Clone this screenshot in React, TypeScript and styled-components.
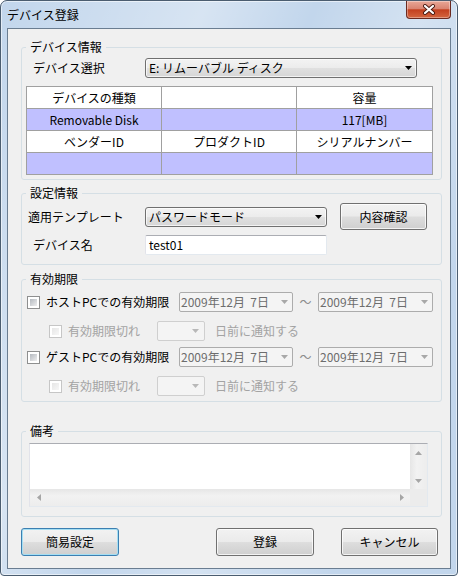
import React from 'react'
import styled, { createGlobalStyle } from 'styled-components'

const GlobalStyle = createGlobalStyle`
  html, body {
    margin: 0;
    padding: 0;
    background: #ffffff;
  }
  body {
    font-family: "Noto Sans CJK JP", "Liberation Sans", sans-serif;
    font-size: 12px;
    color: #000;
  }
  * {
    box-sizing: border-box;
  }
`

const Window = styled.div`
  width: 458px;
  height: 576px;
  display: flex;
  flex-direction: column;
  border: 1px solid #4b5d70;
  border-radius: 7px 7px 4px 4px;
  overflow: hidden;
  background:
    linear-gradient(112deg, rgba(255, 255, 255, 0) 0%, rgba(255, 255, 255, 0.35) 30%, rgba(255, 255, 255, 0) 46%, rgba(255, 255, 255, 0.3) 62%, rgba(255, 255, 255, 0) 82%),
    #c2d6ec;
  box-shadow: inset 0 0 0 1px rgba(255, 255, 255, 0.55);
`

const TitleBar = styled.div`
  height: 27px;
  display: flex;
  justify-content: space-between;
  align-items: flex-start;
  padding: 0 6px 0 6px;
`

const TitleText = styled.span`
  margin-top: 5px;
  font-size: 12px;
  line-height: 17px;
`

const CloseButton = styled.div`
  width: 45px;
  height: 18px;
  display: flex;
  align-items: center;
  justify-content: center;
  border: 1px solid #6b2a20;
  border-top: none;
  border-radius: 0 0 4px 4px;
  background: linear-gradient(#e8a797 0%, #d98471 45%, #c3401f 52%, #d4653f 100%);
  box-shadow: inset 0 0 0 1px rgba(255, 255, 255, 0.35);
`

const Client = styled.div`
  flex: 1;
  margin: 0 6px 6px 6px;
  border: 1px solid #6a7d91;
  background: #f0f0f0;
  padding: 11px 8px 0 13px;
  display: flex;
  flex-direction: column;
`

const Group = styled.fieldset<{ $top?: number; $bottom?: number }>`
  margin: ${p => p.$top ?? 0}px 0 0 0;
  padding: 0 8px ${p => p.$bottom ?? 4}px 4px;
  min-width: 0;
  border: 1px solid #d5dfe5;
  border-radius: 3px;
`

const Legend = styled.legend`
  padding: 0 4px;
  font-size: 12px;
  line-height: 14px;
`

const FieldRow = styled.div`
  margin-top: 4px;
  height: 20px;
  display: flex;
  align-items: center;
`

const Label = styled.span<{ $indent?: number; $w?: number; $area?: string }>`
  flex: none;
  grid-area: ${p => p.$area ?? 'auto'};
  width: ${p => (p.$w ? `${p.$w}px` : 'auto')};
  padding-left: ${p => p.$indent ?? 0}px;
  white-space: nowrap;
  line-height: 14px;
`

const Combo = styled.div<{ $w?: number; $area?: string }>`
  grid-area: ${p => p.$area ?? 'auto'};
  width: ${p => (p.$w ? `${p.$w}px` : '100%')};
  height: 20px;
  display: flex;
  align-items: center;
  justify-content: space-between;
  padding: 0 4px 0 3px;
  border: 1px solid #707070;
  border-radius: 3px;
  background: linear-gradient(#f3f3f3 0%, #ececec 48%, #e0e0e0 52%, #d6d6d6 100%);
  box-shadow: inset 0 0 0 1px rgba(255, 255, 255, 0.7);
  white-space: nowrap;
  line-height: 14px;
`

const InfoTable = styled.table`
  margin-top: 8px;
  width: 406px;
  border-collapse: collapse;
  table-layout: fixed;
`

const Cell = styled.td<{ $shade?: boolean }>`
  height: 22px;
  padding: 0;
  border: 1px solid #a0a0a0;
  text-align: center;
  vertical-align: middle;
  line-height: 14px;
  background: ${p => (p.$shade ? '#c0c0ff' : '#ffffff')};
`

const SettingGrid = styled.div`
  margin-top: 3px;
  display: grid;
  grid-template-columns: 119px 182px 13px 87px;
  grid-template-rows: 27px 20px;
  grid-template-areas:
    'tlabel tcombo . btn'
    'nlabel nfield . .';
  row-gap: 5px;
  align-items: center;
`

const TextBox = styled.div<{ $area?: string }>`
  grid-area: ${p => p.$area ?? 'auto'};
  height: 20px;
  display: flex;
  align-items: center;
  padding-left: 3px;
  border: 1px solid;
  border-color: #abadb3 #e3e9ef #e3e9ef #e2e3ea;
  border-radius: 2px;
  background: #ffffff;
  line-height: 14px;
`

const PushButton = styled.div<{ $w?: number; $default?: boolean }>`
  width: ${p => (p.$w ? `${p.$w}px` : '100%')};
  height: ${p => (p.$w ? '28px' : '100%')};
  display: flex;
  align-items: center;
  justify-content: center;
  border: 1px solid ${p => (p.$default ? '#3c7fb1' : '#707070')};
  border-radius: 3px;
  background: linear-gradient(#f2f2f2 0%, #ebebeb 48%, #dddddd 52%, #cfcfcf 100%);
  box-shadow: inset 0 0 0 1px ${p => (p.$default ? '#a4def3' : 'rgba(255, 255, 255, 0.75)')};
  line-height: 14px;
`

const CheckButton = styled(PushButton)`
  grid-area: btn;
`

const PeriodBlock = styled.div`
  margin-top: 6px;
  display: flex;
  flex-direction: column;
  gap: 9px;
`

const PeriodRow = styled.div`
  height: 20px;
  display: flex;
  align-items: center;
`

const CheckCell = styled.div<{ $w: number; $indent: number }>`
  flex: none;
  width: ${p => p.$w}px;
  padding-left: ${p => p.$indent}px;
  display: flex;
  align-items: center;
  gap: 6px;
  white-space: nowrap;
  line-height: 14px;
`

const CheckBox = styled.span<{ $disabled?: boolean }>`
  position: relative;
  flex: none;
  width: 13px;
  height: 13px;
  border: 1px solid ${p => (p.$disabled ? '#c6c6c6' : '#8e8f8f')};
  background: #ffffff;

  &::after {
    content: '';
    position: absolute;
    inset: 2px;
    background: ${p =>
      p.$disabled
        ? 'linear-gradient(135deg, #e6e6e6, #f7f7f7)'
        : 'linear-gradient(135deg, #b4b9bf, #eeeeef)'};
  }
`

const DimText = styled.span`
  flex: none;
  color: #a3a3a3;
  white-space: nowrap;
  line-height: 14px;
`

const DateBox = styled.div<{ $w: number }>`
  flex: none;
  width: ${p => p.$w}px;
  height: 20px;
  display: flex;
  align-items: center;
  justify-content: space-between;
  padding: 0 4px 0 1px;
  border: 1px solid #acacac;
  border-radius: 2px;
  background: #f4f4f4;
  color: #6d6d6d;
  white-space: nowrap;
  line-height: 14px;
`

const Tilde = styled.span`
  flex: none;
  width: 25px;
  text-align: center;
  color: #8a8a8a;
  line-height: 14px;
`

const SmallCombo = styled.div`
  flex: none;
  width: 48px;
  height: 20px;
  display: flex;
  align-items: center;
  justify-content: flex-end;
  padding-right: 5px;
  margin-right: 10px;
  border: 1px solid #cfcfcf;
  border-radius: 2px;
  background: #f4f4f4;
`

const Memo = styled.div`
  margin: 5px 0 0 3px;
  width: 399px;
  height: 64px;
  display: grid;
  grid-template-columns: 1fr 17px;
  grid-template-rows: 1fr 17px;
  border: 1px solid;
  border-color: #abadb3 #e3e9ef #e3e9ef #e2e3ea;
  background: #ffffff;
`

const MemoText = styled.div`
  background: #ffffff;
`

const ScrollTrack = styled.div<{ $vertical?: boolean }>`
  display: flex;
  flex-direction: ${p => (p.$vertical ? 'column' : 'row')};
  justify-content: space-between;
  background: ${p =>
    p.$vertical
      ? 'linear-gradient(90deg, #e6e6e6, #f2f2f2 40%, #ededed)'
      : 'linear-gradient(#e6e6e6, #f2f2f2 40%, #ededed)'};
`

const ScrollArrow = styled.div`
  width: 17px;
  height: 17px;
  display: flex;
  align-items: center;
  justify-content: center;
`

const Corner = styled.div`
  background: #ececec;
`

const Footer = styled.div`
  margin-top: 11px;
  padding-right: 4px;
  display: flex;
  gap: 27px;

  & > :nth-child(2) {
    margin-left: auto;
  }
`

function DropArrow({ color = '#000000' }: { color?: string }) {
  return (
    <svg width="7" height="4" viewBox="0 0 7 4">
      <polygon points="0,0 7,0 3.5,4" fill={color} />
    </svg>
  )
}

function Tri({ dir }: { dir: 'up' | 'down' | 'left' | 'right' }) {
  const pts = {
    up: '0,4 7,4 3.5,0',
    down: '0,0 7,0 3.5,4',
    left: '4,0 4,7 0,3.5',
    right: '0,0 0,7 4,3.5',
  }[dir]
  const wide = dir === 'up' || dir === 'down'
  return (
    <svg width={wide ? 7 : 4} height={wide ? 4 : 7} viewBox={wide ? '0 0 7 4' : '0 0 4 7'}>
      <polygon points={pts} fill="#a6a6a6" />
    </svg>
  )
}

function CloseGlyph() {
  return (
    <svg width="14" height="11" viewBox="0 0 14 11">
      <path d="M3 2 L11 9 M11 2 L3 9" stroke="#4a1a12" strokeWidth="4" strokeLinecap="round" />
      <path d="M3 2 L11 9 M11 2 L3 9" stroke="#ffffff" strokeWidth="2.2" strokeLinecap="round" />
    </svg>
  )
}

const DATE = '2009年12月\u00a0\u00a07日'

function Period({ label }: { label: string }) {
  return (
    <PeriodBlock>
      <PeriodRow>
        <CheckCell $w={153} $indent={1}>
          <CheckBox />
          <span>{label}</span>
        </CheckCell>
        <DateBox $w={114}>
          <span>{DATE}</span>
          <DropArrow color="#a8a8a8" />
        </DateBox>
        <Tilde>〜</Tilde>
        <DateBox $w={115}>
          <span>{DATE}</span>
          <DropArrow color="#a8a8a8" />
        </DateBox>
      </PeriodRow>
      <PeriodRow>
        <CheckCell $w={131} $indent={23}>
          <CheckBox $disabled />
          <DimText>有効期限切れ</DimText>
        </CheckCell>
        <SmallCombo>
          <DropArrow color="#b8b8b8" />
        </SmallCombo>
        <DimText>日前に通知する</DimText>
      </PeriodRow>
    </PeriodBlock>
  )
}

export default function App() {
  return (
    <>
      <GlobalStyle />
      <Window>
        <TitleBar>
          <TitleText>デバイス登録</TitleText>
          <CloseButton>
            <CloseGlyph />
          </CloseButton>
        </TitleBar>
        <Client>
          <Group>
            <Legend>デバイス情報</Legend>
            <FieldRow>
              <Label $indent={7} $w={119}>デバイス選択</Label>
              <Combo $w={272}>
                <span>E: リムーバブル ディスク</span>
                <DropArrow />
              </Combo>
            </FieldRow>
            <InfoTable>
              <colgroup>
                <col style={{ width: 135 }} />
                <col style={{ width: 135 }} />
                <col style={{ width: 136 }} />
              </colgroup>
              <tbody>
                <tr>
                  <Cell>デバイスの種類</Cell>
                  <Cell />
                  <Cell>容量</Cell>
                </tr>
                <tr>
                  <Cell $shade>Removable Disk</Cell>
                  <Cell $shade />
                  <Cell $shade>117[MB]</Cell>
                </tr>
                <tr>
                  <Cell>ベンダーID</Cell>
                  <Cell>プロダクトID</Cell>
                  <Cell>シリアルナンバー</Cell>
                </tr>
                <tr>
                  <Cell $shade />
                  <Cell $shade />
                  <Cell $shade />
                </tr>
              </tbody>
            </InfoTable>
          </Group>

          <Group $top={6} $bottom={9}>
            <Legend>設定情報</Legend>
            <SettingGrid>
              <Label $indent={2} $area="tlabel">適用テンプレート</Label>
              <Combo $area="tcombo">
                <span>パスワードモード</span>
                <DropArrow />
              </Combo>
              <CheckButton>内容確認</CheckButton>
              <Label $indent={7} $area="nlabel">デバイス名</Label>
              <TextBox $area="nfield">test01</TextBox>
            </SettingGrid>
          </Group>

          <Group $top={7} $bottom={5}>
            <Legend>有効期限</Legend>
            <Period label="ホストPCでの有効期限" />
            <Period label="ゲストPCでの有効期限" />
          </Group>

          <Group $top={22} $bottom={9}>
            <Legend>備考</Legend>
            <Memo>
              <MemoText />
              <ScrollTrack $vertical>
                <ScrollArrow>
                  <Tri dir="up" />
                </ScrollArrow>
                <ScrollArrow>
                  <Tri dir="down" />
                </ScrollArrow>
              </ScrollTrack>
              <ScrollTrack>
                <ScrollArrow>
                  <Tri dir="left" />
                </ScrollArrow>
                <ScrollArrow>
                  <Tri dir="right" />
                </ScrollArrow>
              </ScrollTrack>
              <Corner />
            </Memo>
          </Group>

          <Footer>
            <PushButton $w={98} $default>簡易設定</PushButton>
            <PushButton $w={98}>登録</PushButton>
            <PushButton $w={97}>キャンセル</PushButton>
          </Footer>
        </Client>
      </Window>
    </>
  )
}
